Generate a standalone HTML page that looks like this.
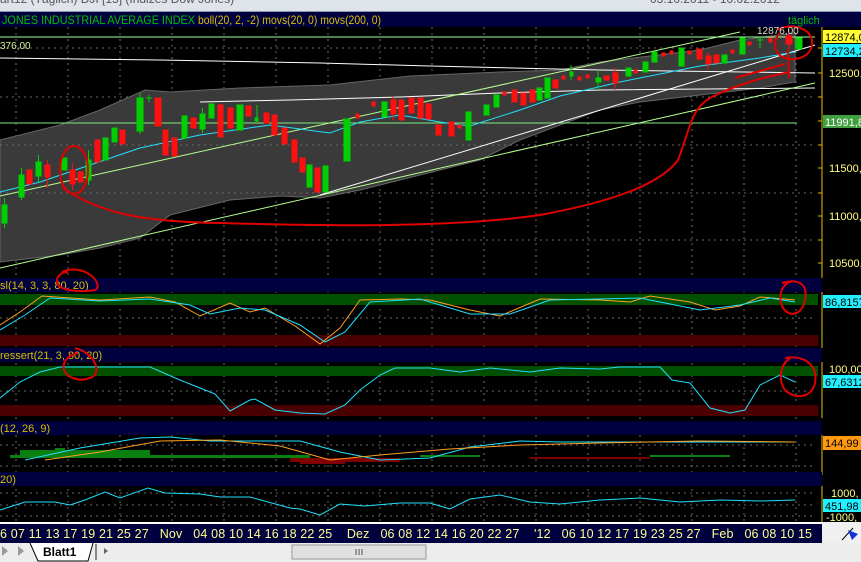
<!DOCTYPE html>
<html><head><meta charset="utf-8"><style>
html,body{margin:0;padding:0;width:861px;height:562px;overflow:hidden;background:#000;font-family:"Liberation Sans",sans-serif}
svg{display:block}
</style></head><body>
<svg width="861" height="562" viewBox="0 0 861 562" xmlns="http://www.w3.org/2000/svg" font-family="Liberation Sans, sans-serif">
<rect width="861" height="562" fill="#000"/>
<rect x="0" y="0" width="861" height="11" fill="#dfe3ea"/>
<text x="0" y="3" font-size="12" fill="#555">art12 (Täglich)  DJI [15] (Indizes Dow Jones)</text>
<text x="650" y="3" font-size="12" fill="#555">03.10.2011 - 10.02.2012</text>
<rect x="0" y="11" width="861" height="1" fill="#8896b0"/>
<rect x="0" y="12" width="861" height="15" fill="#00003e"/>
<text x="2" y="24" font-size="12" fill="#00c000" textLength="193" lengthAdjust="spacingAndGlyphs">JONES INDUSTRIAL AVERAGE INDEX</text>
<text x="198" y="24" font-size="12" fill="#d8c000" textLength="183" lengthAdjust="spacingAndGlyphs">boll(20, 2, -2) movs(20, 0) movs(200, 0)</text>
<text x="788" y="24" font-size="11" fill="#00c000">täglich</text>
<g stroke="#6a6a6a" stroke-dasharray="2,4" stroke-width="1">
<path d="M16 27V522M68 27V522M120 27V522M172 27V522M224 27V522M276 27V522M328 27V522M380 27V522M432 27V522M484 27V522M536 27V522M588 27V522M640 27V522M692 27V522M744 27V522M796 27V522"/>
<path d="M0 48H815M0 97H815M0 145H815M0 193H815M0 240H815"/>
</g>
<path d="M0 140 L60 125 L100 110 L145 90 L170 92 L240 88 L300 86 L330 85 L410 76 L500 72 L560 70 L600 62 L700 50 L740 40 L795 33 L795 82 L760 88 L700 95 L640 102 L600 110 L560 125 L520 140 L480 160 L440 170 L400 180 L360 190 L320 198 L280 196 L230 200 L170 215 L140 238 L100 248 L60 255 L0 262 Z" fill="#3a3a3a" stroke="#666" stroke-width="1"/>
<g stroke="#6a6a6a" stroke-dasharray="2,4" stroke-width="1"><path d="M0 145H815M0 193H815"/></g>
<path d="M0 37H815" stroke="#a0ffa0" stroke-width="1"/>
<path d="M0 123H797" stroke="#80ee80" stroke-width="1"/>
<path d="M0 58 L160 60 L320 63 L430 66 L600 70 L815 73" stroke="#fff" fill="none"/>
<path d="M200 102 L290 100 L400 97 L500 93 L600 90 L815 88" stroke="#fff" fill="none"/>
<path d="M0 196 L740 32" stroke="#b8ff90" fill="none"/>
<path d="M0 268 L815 83" stroke="#b8ff90" fill="none"/>
<path d="M320 195 L815 45" stroke="#fff" fill="none"/>
<path d="M0 192 L40 182 L90 165 L140 148 L200 135 L270 125 L330 133 L360 122 L400 115 L440 122 L470 126 L520 110 L560 96 L620 82 L700 66 L760 58 L795 52" stroke="#20e0ff" fill="none"/>
<g stroke-width="1">
<g fill="#00d000" stroke="#00d000">
<rect x="2" y="205" width="5" height="18"/><line x1="4.5" y1="198" x2="4.5" y2="228"/>
<rect x="19" y="175" width="5" height="22"/><line x1="21.5" y1="168" x2="21.5" y2="200"/>
<rect x="36" y="162" width="5" height="14"/><line x1="38.5" y1="155" x2="38.5" y2="182"/>
<rect x="62" y="158" width="5" height="12"/>
<rect x="86" y="160" width="5" height="20"/><line x1="88.5" y1="150" x2="88.5" y2="185"/>
<rect x="103" y="138" width="5" height="22"/>
<rect x="112" y="128" width="5" height="14"/>
<rect x="137" y="98" width="6" height="33"/><line x1="140" y1="93" x2="140" y2="134"/>
<line x1="146" y1="98" x2="152" y2="98"/><line x1="149" y1="95" x2="149" y2="102"/>
<rect x="182" y="116" width="5" height="22"/>
<rect x="200" y="114" width="5" height="15"/><line x1="202.5" y1="108" x2="202.5" y2="133"/>
<rect x="209" y="104" width="5" height="14"/>
<rect x="237" y="105" width="6" height="25"/>
<rect x="255" y="118" width="3" height="3"/><line x1="257" y1="105" x2="257" y2="122"/>
<rect x="307" y="165" width="5" height="22"/>
<rect x="323" y="166" width="5" height="26"/>
<rect x="344" y="119" width="6" height="42"/>
<rect x="382" y="102" width="5" height="15"/>
<rect x="466" y="112" width="5" height="28"/>
<rect x="484" y="105" width="5" height="10"/>
<rect x="494" y="95" width="5" height="12"/>
<rect x="537" y="88" width="5" height="12"/>
<rect x="545" y="78" width="5" height="20"/>
<rect x="570" y="72" width="3" height="4"/><line x1="571" y1="65" x2="571" y2="80"/>
<rect x="596" y="78" width="5" height="4"/><line x1="598" y1="70" x2="598" y2="90"/>
<rect x="626" y="68" width="5" height="8"/>
<rect x="643" y="62" width="5" height="10"/>
<rect x="652" y="52" width="5" height="10"/>
<rect x="679" y="48" width="5" height="18"/>
<rect x="722" y="55" width="5" height="8"/>
<rect x="740" y="38" width="5" height="16"/>
<line x1="760" y1="37" x2="760" y2="48"/><line x1="757" y1="40" x2="763" y2="40"/>
<rect x="796" y="38" width="6" height="11"/>
</g>
<g fill="#ff1010" stroke="#ff1010">
<rect x="27" y="170" width="5" height="14"/>
<rect x="45" y="165" width="5" height="12"/><line x1="47.5" y1="160" x2="47.5" y2="188"/>
<rect x="70" y="170" width="5" height="14"/><line x1="72.5" y1="163" x2="72.5" y2="190"/>
<rect x="78" y="172" width="5" height="10"/>
<rect x="95" y="140" width="5" height="22"/>
<rect x="120" y="130" width="5" height="14"/>
<rect x="155" y="98" width="6" height="28"/>
<rect x="163" y="130" width="5" height="25"/>
<rect x="172" y="138" width="5" height="18"/>
<rect x="191" y="118" width="5" height="10"/>
<rect x="218" y="105" width="5" height="32"/>
<rect x="228" y="108" width="5" height="20"/>
<rect x="246" y="106" width="5" height="10"/>
<rect x="264" y="113" width="5" height="10"/>
<rect x="272" y="115" width="5" height="20"/>
<rect x="282" y="128" width="5" height="16"/>
<rect x="292" y="140" width="5" height="22"/>
<rect x="300" y="158" width="5" height="14"/>
<rect x="315" y="168" width="5" height="24"/>
<rect x="356" y="114" width="3" height="4"/>
<rect x="372" y="102" width="3" height="4"/>
<rect x="391" y="100" width="5" height="14"/><line x1="393" y1="96" x2="393" y2="120"/>
<rect x="399" y="100" width="5" height="20"/>
<rect x="409" y="98" width="5" height="15"/>
<rect x="418" y="98" width="5" height="20"/>
<rect x="426" y="104" width="5" height="15"/>
<rect x="436" y="125" width="5" height="10"/>
<rect x="449" y="122" width="5" height="14"/>
<rect x="458" y="125" width="3" height="3"/>
<rect x="503" y="92" width="3" height="3"/>
<rect x="512" y="90" width="5" height="12"/>
<rect x="521" y="93" width="5" height="12"/>
<rect x="530" y="90" width="5" height="12"/>
<rect x="553" y="80" width="5" height="8"/>
<rect x="562" y="76" width="3" height="3"/>
<rect x="578" y="77" width="3" height="3"/>
<rect x="586" y="75" width="3" height="3"/>
<rect x="604" y="76" width="5" height="4"/>
<rect x="613" y="73" width="5" height="10"/><line x1="615" y1="68" x2="615" y2="90"/>
<rect x="634" y="70" width="3" height="3"/>
<rect x="662" y="53" width="3" height="3"/>
<rect x="670" y="51" width="3" height="3"/>
<rect x="688" y="51" width="3" height="3"/>
<rect x="697" y="49" width="5" height="10"/>
<rect x="706" y="56" width="5" height="8"/><line x1="708" y1="52" x2="708" y2="70"/>
<rect x="714" y="55" width="5" height="8"/>
<rect x="731" y="50" width="3" height="3"/>
<rect x="748" y="42" width="3" height="3"/>
<rect x="769" y="38" width="3" height="4"/>
<rect x="786" y="36" width="6" height="8"/><line x1="789" y1="30" x2="789" y2="50"/>
</g>
</g>
<g stroke="#e00000" stroke-width="2" fill="none">
<ellipse cx="74" cy="170" rx="14" ry="24"/>
<path d="M62 187 C100 215 150 222 220 223 C330 226 450 228 540 215 C610 202 660 185 678 160 C690 130 690 110 710 98 C735 85 760 78 790 72"/>
<path d="M735 78 L785 64 M788 50 L789 78"/>
<path d="M778 30 C790 22 810 28 812 40 C814 55 798 62 785 58 C774 55 772 40 780 33"/>
</g>
<text x="757" y="34" font-size="10" fill="#ddd">12876,00</text>
<text x="0" y="49" font-size="10" fill="#d8f0a0">376,00</text>
<rect x="822" y="27" width="39" height="251" fill="#000"/>
<path d="M822 27V278" stroke="#e0c000"/>
<g stroke="#e0c000"><path d="M818 48h4M818 73h4M818 97h4M818 121h4M818 145h4M818 168h4M818 193h4M818 216h4M818 240h4M818 263h4"/></g>
<rect x="823" y="30" width="38" height="13" fill="#ffff30"/><text x="825" y="41" font-size="11" fill="#000">12874,0</text>
<rect x="823" y="44" width="38" height="13" fill="#20f0ff"/><text x="825" y="55" font-size="11" fill="#000">12734,2</text>
<text x="829" y="77" font-size="11" fill="#ffff80">12500,</text>
<rect x="823" y="115" width="38" height="13" fill="#40a040"/><text x="825" y="126" font-size="11" fill="#fff">11991,8</text>
<text x="829" y="172" font-size="11" fill="#ffff80">11500,</text>
<text x="829" y="220" font-size="11" fill="#ffff80">11000,</text>
<text x="829" y="267" font-size="11" fill="#ffff80">10500,</text>
<rect x="0" y="278" width="822" height="14" fill="#00003e"/>
<text x="0" y="289" font-size="11" fill="#d8c000">sl(14, 3, 3, 80, 20)</text>
<rect x="0" y="294" width="818" height="11" fill="#005000"/>
<rect x="0" y="335" width="818" height="11" fill="#4a0000"/>
<g stroke="#6a6a6a" stroke-dasharray="2,4"><path d="M0 318H815"/></g>
<path d="M0 325 L20 312 L42 296 L100 300 L150 297 L175 302 L200 316 L230 303 L250 312 L265 308 L295 326 L320 344 L340 328 L360 300 L400 299 L430 300 L470 310 L500 316 L540 299 L600 300 L630 302 L650 296 L690 302 L715 310 L740 306 L760 297 L795 300" stroke="#ffa020" fill="none"/>
<path d="M0 330 L25 315 L50 298 L100 301 L150 299 L190 305 L210 314 L240 308 L265 310 L300 325 L325 342 L345 332 L370 302 L420 299 L470 314 L510 314 L550 300 L600 299 L640 298 L700 310 L740 305 L770 298 L795 302" stroke="#20e0ff" fill="none"/>
<path d="M822 292V348" stroke="#e0c000"/>
<rect x="823" y="295" width="38" height="13" fill="#20f0ff"/><text x="825" y="306" font-size="11" fill="#000">86,8157</text>
<g stroke="#e00000" stroke-width="2" fill="none"><path d="M62 272 C85 262 105 285 95 290 C85 292 58 292 57 282 C56 276 62 272 68 272"/><path d="M782 283 C800 278 808 285 805 300 C802 315 790 318 783 308 C778 298 780 285 792 281"/></g>
<rect x="0" y="348" width="822" height="14" fill="#00003e"/>
<text x="0" y="359" font-size="11" fill="#d8c000">ressert(21, 3, 80, 20)</text>
<rect x="0" y="366" width="818" height="10" fill="#005000"/>
<rect x="0" y="405" width="818" height="11" fill="#4a0000"/>
<g stroke="#6a6a6a" stroke-dasharray="2,4"><path d="M0 391H815"/></g>
<path d="M0 398 L20 382 L40 372 L60 367 L150 367 L180 380 L200 388 L215 394 L230 411 L250 400 L255 399 L275 410 L300 413 L325 414 L345 405 L360 390 L380 375 L395 368 L430 368 L460 372 L490 368 L530 372 L560 368 L600 369 L620 367 L660 367 L672 380 L690 383 L710 408 L730 413 L745 410 L760 385 L780 375 L795 382" stroke="#20e0ff" fill="none"/>
<path d="M822 362V418" stroke="#e0c000"/>
<text x="829" y="373" font-size="11" fill="#ffff80">100,00</text>
<rect x="823" y="375" width="38" height="13" fill="#20f0ff"/><text x="825" y="386" font-size="11" fill="#000">67,6312</text>
<g stroke="#e00000" stroke-width="2" fill="none"><path d="M75 348 C90 352 100 365 95 375 C85 383 68 380 64 370 C62 362 68 355 78 353"/><path d="M785 358 C805 355 818 365 815 383 C812 398 795 400 785 390 C778 380 780 365 790 358"/></g>
<rect x="0" y="421" width="822" height="14" fill="#00003e"/>
<text x="0" y="432" font-size="11" fill="#d8c000">(12, 26, 9)</text>
<g stroke="#6a6a6a" stroke-dasharray="2,4"><path d="M0 445H815M0 466H815"/></g>
<g fill="#0a8010"><rect x="10" y="455" width="300" height="3"/><rect x="20" y="450" width="130" height="8"/><rect x="55" y="448" width="10" height="10"/><rect x="420" y="455" width="60" height="2"/><rect x="650" y="455" width="80" height="2"/></g>
<g fill="#800000"><rect x="290" y="458" width="110" height="4"/><rect x="300" y="458" width="45" height="6"/><rect x="530" y="457" width="120" height="2"/></g>
<path d="M25 460 L80 448 L140 438 L170 437 L210 441 L300 441 L340 452 L380 460 L430 458 L470 447 L520 441 L560 442 L620 442 L700 442 L795 442" stroke="#20e0ff" fill="none"/>
<path d="M45 460 L100 452 L160 441 L220 440 L280 446 L330 460 L380 455 L450 449 L520 445 L600 443 L700 441 L795 442" stroke="#ffa020" fill="none"/>
<path d="M822 435V475" stroke="#e0c000"/>
<rect x="823" y="436" width="38" height="14" fill="#ff9a10"/><text x="825" y="447" font-size="11" fill="#000">144,99</text>
<rect x="0" y="472" width="822" height="14" fill="#00003e"/>
<text x="0" y="483" font-size="11" fill="#d8c000">20)</text>
<g stroke="#6a6a6a" stroke-dasharray="2,4"><path d="M0 493H815M0 505H815M0 516H815"/></g>
<path d="M0 510 L25 502 L55 502 L70 505 L85 500 L105 492 L120 498 L148 488 L165 493 L200 494 L220 497 L250 497 L290 508 L300 509 L320 515 L340 504 L365 506 L400 503 L430 503 L450 509 L470 499 L500 495 L530 502 L560 504 L600 500 L640 498 L680 502 L720 500 L760 501 L795 500" stroke="#20e0ff" fill="none"/>
<path d="M822 486V523" stroke="#e0c000"/>
<text x="831" y="497" font-size="11" fill="#ffff80">1000,</text>
<rect x="823" y="499" width="38" height="13" fill="#20f0ff"/><text x="825" y="510" font-size="11" fill="#000">451,98</text>
<text x="826" y="521" font-size="11" fill="#ffff80">-1000,</text>
<rect x="0" y="522" width="822" height="2" fill="#fff"/>
<rect x="0" y="524" width="822" height="19" fill="#00003e"/>
<text x="0" y="538" font-size="12.5" fill="#ffff90" textLength="812" lengthAdjust="spacing" style="white-space:pre" xml:space="preserve">6 07 11 13 17 19 21 25 27   Nov   04 08 10 14 16 18 22 25    Dez   06 08 12 14 16 20 22 27    '12   06 10 12 17 19 23 25 27   Feb   06 08 10 15</text>
<rect x="822" y="522" width="39" height="21" fill="#f0f0f0"/>
<path d="M842 540 L853 528" stroke="#000"/><path d="M848 530 L858 534 L852 540 Z" fill="#1030e0"/>
<rect x="0" y="543" width="861" height="19" fill="#ececec"/>
<path d="M2 546 L8 551 L2 556Z M18 546 L24 551 L18 556Z" fill="#999"/>
<path d="M30 543 L38 561 L88 561 L93 543" fill="#fff" stroke="#000"/>
<text x="43" y="556" font-size="12" font-weight="bold" fill="#000">Blatt1</text>
<path d="M96 544V560" stroke="#888" stroke-width="2"/>
<path d="M108 551 L104 548 L104 554Z" fill="#666"/>
<rect x="292" y="545" width="134" height="14" fill="#e0e0e0" stroke="#999"/>
<path d="M356 549V555M359 549V555M362 549V555" stroke="#555"/>
</svg>
</body></html>
